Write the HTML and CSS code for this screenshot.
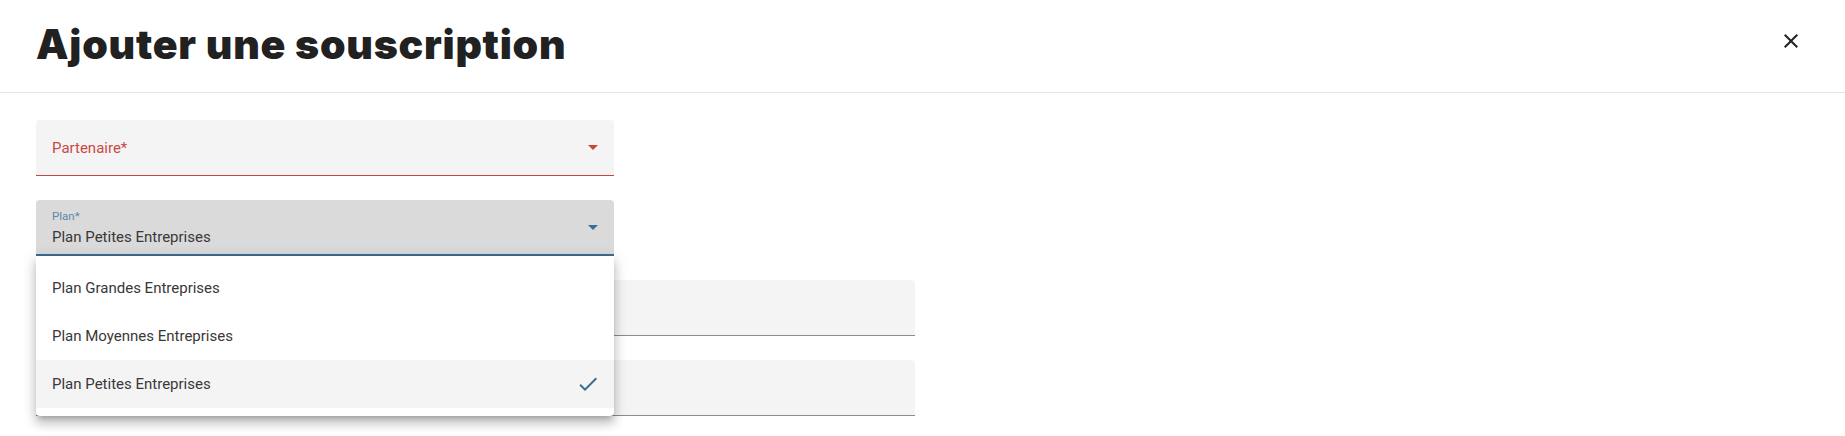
FILE: index.html
```html
<!DOCTYPE html>
<html lang="fr">
<head>
<meta charset="utf-8">
<title>Ajouter une souscription</title>
<link rel="stylesheet" href="styles.css">
</head>
<body>
<div class="dialog">
  <header class="dialog-header">
    <h1 class="dialog-title">Ajouter une souscription</h1>
    <button class="close-btn" aria-label="Fermer">
      <svg viewBox="0 0 24 24" width="24" height="24"><path d="M19 6.41L17.59 5 12 10.59 6.41 5 5 6.41 10.59 12 5 17.59 6.41 19 12 13.41 17.59 19 19 17.59 13.41 12z" fill="#212121"/></svg>
    </button>
  </header>
  <div class="dialog-body">
    <div class="field field-narrow field-error">
      <div class="field-content">
        <span class="field-placeholder">Partenaire*</span>
      </div>
      <span class="arrow arrow-error"></span>
    </div>
    <div class="select-wrap">
      <div class="field field-narrow field-focused">
        <div class="field-content stacked">
          <span class="field-label">Plan*</span>
          <span class="field-value">Plan Petites Entreprises</span>
        </div>
        <span class="arrow arrow-focused"></span>
      </div>
      <ul class="menu">
        <li class="menu-item">Plan Grandes Entreprises</li>
        <li class="menu-item">Plan Moyennes Entreprises</li>
        <li class="menu-item selected">Plan Petites Entreprises
          <svg viewBox="0 0 24 24" width="24" height="24"><path d="M9 16.17L4.83 12l-1.42 1.41L9 19 21 7l-1.41-1.41z" fill="#3d6c91"/></svg>
        </li>
      </ul>
    </div>
    <div class="field field-wide"></div>
    <div class="field field-wide"></div>
  </div>
</div>
</body>
</html>
```

FILE: styles.css
```css
* { box-sizing: border-box; }
html, body {
  margin: 0;
  padding: 0;
  background: #ffffff;
  font-family: Roboto, "Liberation Sans", sans-serif;
}
.dialog {
  width: 1845px;
  height: 436px;
  overflow: hidden;
}
.dialog-header {
  height: 93px;
  display: flex;
  align-items: center;
  justify-content: space-between;
  padding: 0 42px 0 36px;
  border-bottom: 1px solid #e6e6e6;
}
.dialog-title {
  margin: 0;
  margin-top: -4px;
  font-family: Inter, "Noto Sans", sans-serif;
  font-weight: 900;
  font-size: 41px;
  letter-spacing: 0.75px;
  color: #212121;
}
.close-btn {
  border: 0;
  background: transparent;
  padding: 0;
  width: 24px;
  height: 24px;
  margin-top: -10px;
  display: flex;
}
.dialog-body {
  padding: 27px 0 0 36px;
  display: flex;
  flex-direction: column;
  gap: 24px;
}
.field {
  height: 56px;
  background: #f4f4f4;
  border-radius: 4px 4px 0 0;
  border-bottom: 1px solid #8c8c8c;
  display: flex;
  align-items: center;
  padding: 0 16px;
}
.field-narrow { width: 578px; }
.field-wide { width: 879px; }
.field-error { border-bottom-color: #c8453f; }
.field-focused {
  background: #dadada;
  border-bottom: 2px solid #3d6c91;
}
.field-content {
  flex: 1;
  font-size: 15px;
  line-height: 19px;
  padding-top: 2px;
}
.field-content.stacked {
  align-self: flex-start;
  padding-top: 9px;
  display: flex;
  flex-direction: column;
  gap: 5px;
}
.field-placeholder { color: #c94a47; }
.field-label {
  font-size: 11.5px;
  line-height: 14px;
  color: #5f88a8;
}
.field-value {
  color: #383838;
}
.arrow {
  width: 0;
  height: 0;
  border-left: 5px solid transparent;
  border-right: 5px solid transparent;
  border-top: 5px solid #888;
}
.arrow-error { border-top-color: #c8453f; }
.arrow-focused { border-top-color: #3d6c91; }
.select-wrap {
  position: relative;
  width: 578px;
}
.menu {
  position: absolute;
  top: 100%;
  left: 0;
  width: 100%;
  margin: 0;
  padding: 8px 0;
  list-style: none;
  background: #ffffff;
  border-radius: 0 0 4px 4px;
  box-shadow: 0 5px 5px -3px rgba(0,0,0,0.2), 0 8px 10px 1px rgba(0,0,0,0.14), 0 3px 14px 2px rgba(0,0,0,0.12);
  z-index: 10;
}
.menu-item {
  height: 48px;
  display: flex;
  align-items: center;
  justify-content: space-between;
  padding: 1px 14px 0 16px;
  font-size: 15px;
  line-height: 19px;
  color: #383838;
}
.menu-item svg { margin-top: -1px; }
.menu-item.selected { background: #f4f4f4; }
```
